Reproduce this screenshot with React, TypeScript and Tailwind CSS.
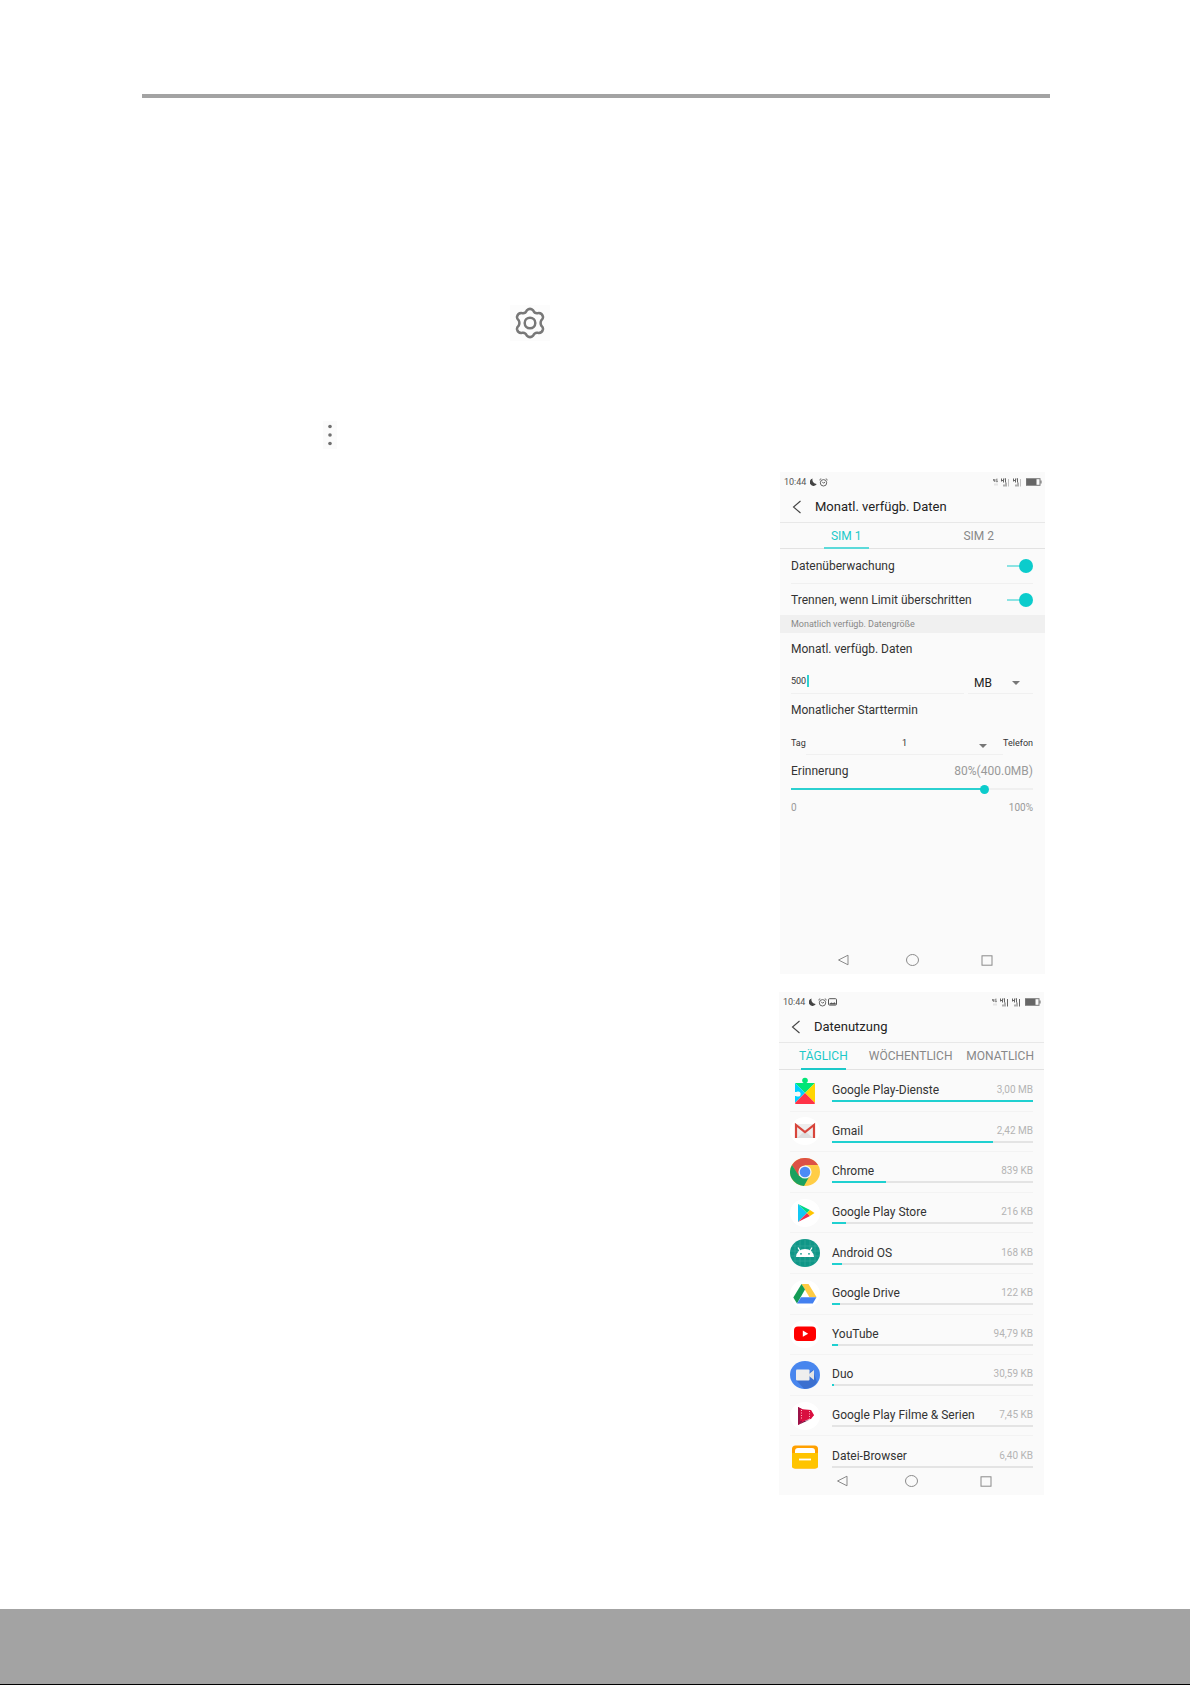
import React from "react";

function SignalIcon({ faint = false }: { faint?: boolean }) {
  return (
    <svg width="9" height="9" viewBox="0 0 9 9" fill="none" stroke="#666" aria-hidden="true">
      <path d="M0.5 0.500v3M2.500 0.500v4M0.5 2.500h2M4.500 0.500v4M3.500 1h1.500" strokeWidth="1" />
      <path d="M3 8.500V6.500M5 8.500V4.500" strokeWidth="1" />
      <path d="M7.500 8.500V1" stroke={faint ? "#c0c0c0" : "#666"} strokeWidth="1" />
    </svg>
  );
}

function StatusBar({ picture = false }: { picture?: boolean }) {
  return (
    <div className="flex h-5 items-center pl-1 pr-[3px] text-[9px] leading-5 text-[#555]">
      <span>10:44</span>
      <svg className="ml-1" width="7" height="8" viewBox="0 0 7 8" aria-hidden="true">
        <path d="M2.600 0.400A3.800 3.800 0 1 0 6.800 6 4.300 4.300 0 0 1 2.600 0.400Z" fill="#444" />
      </svg>
      <svg className="ml-[2px]" width="9" height="9" viewBox="0 0 9 9" fill="none" stroke="#555" strokeWidth="0.900" aria-hidden="true">
        <circle cx="4.500" cy="4.800" r="3.200" />
        <path d="M0.400 2 2.200 0.600M8.600 2 6.800 0.600M3.200 3.800 4.500 5.200 6 4.200" />
      </svg>
      {picture && (
        <svg className="ml-px" width="9" height="8" viewBox="0 0 9 8" fill="none" aria-hidden="true">
          <rect x="0.500" y="0.700" width="8" height="6.400" rx="1" stroke="#555" />
          <path d="M1.500 6.500V5.500l2-1L5 5.300 6.400 4.300 7.800 5.500v1z" fill="#555" />
        </svg>
      )}
      <div className="ml-auto flex items-center">
        <svg width="5" height="9" viewBox="0 0 5 9" fill="none" stroke="#777" strokeWidth="0.900" aria-hidden="true">
          <path d="M0.500 1v1.700h1.300M1.700 1v3M4.600 1.200H3.200v2.500h1.400V2.500" />
          <path d="M2 5.500v2M4 5.500v2" stroke="#ccc" />
        </svg>
        <span className="ml-[3px]"><SignalIcon faint={!picture} /></span>
        <span className="ml-[3px]"><SignalIcon faint={!picture} /></span>
        <svg className="ml-[4px]" width="16" height="8" viewBox="0 0 16 8" fill="none" aria-hidden="true">
          <rect x="0.500" y="0.700" width="13.500" height="6.600" stroke="#777" />
          <path d="M1 1h9.500v6H1z" fill="#666" />
          <path d="M15 2.500v3" stroke="#666" />
        </svg>
      </div>
    </div>
  );
}

function TitleBar({ title }: { title: string }) {
  return (
    <header className="flex h-[31px] items-center border-b border-[#e8e8e8] pl-[12px]">
      <button type="button" aria-label="Zurück">
        <svg width="10" height="14" viewBox="0 0 10 14" fill="none" stroke="#444" strokeWidth="1.100">
          <path d="M8.500 1 1.500 7l7 6" />
        </svg>
      </button>
      <h2 className="ml-[13px] text-[13px] leading-5 text-[#222]">{title}</h2>
    </header>
  );
}

function NavBar() {
  return (
    <nav className="flex h-7 items-center pl-[57px] text-[#8a8a8a]">
      <button type="button" aria-label="Zurück">
        <svg width="12" height="12" viewBox="0 0 12 12" fill="none" stroke="currentColor">
          <path d="M11 1.200v9.600L1.500 6z" />
        </svg>
      </button>
      <button type="button" aria-label="Startseite" className="ml-[57px]">
        <svg width="13" height="12" viewBox="0 0 13 12" fill="none" stroke="currentColor">
          <ellipse cx="6.500" cy="6" rx="6" ry="5.500" />
        </svg>
      </button>
      <button type="button" aria-label="Übersicht" className="ml-[62px]">
        <svg width="12" height="11" viewBox="0 0 12 11" fill="none" stroke="currentColor">
          <rect x="1" y="0.800" width="10" height="9.400" />
        </svg>
      </button>
    </nav>
  );
}

function Toggle({ label, divider = false }: { label: string; divider?: boolean }) {
  return (
    <label className={divider ? "flex h-[35px] items-center justify-between border-b border-[#f0f0f0]" : "flex h-[31px] items-center justify-between"}>
      <span>{label}</span>
      <input
        type="checkbox"
        defaultChecked
        className="relative h-[14px] w-[26px] appearance-none before:absolute before:left-0 before:top-[6px] before:h-[2px] before:w-[14px] before:bg-[#8ce3e3] after:absolute after:right-0 after:top-0 after:size-[14px] after:rounded-full after:bg-[#0ccccc]"
      />
    </label>
  );
}

function Caret() {
  return (
    <svg width="8" height="4" viewBox="0 0 8 4" className="pointer-events-none" aria-hidden="true">
      <path d="M0 0h8L4 4z" fill="#777" />
    </svg>
  );
}

function BudgetScreen() {
  return (
    <section className="flex h-[502px] w-[265px] flex-col bg-[#fafafa]">
      <StatusBar />
      <TitleBar title="Monatl. verfügb. Daten" />
      <div role="tablist" className="grid h-[26px] grid-cols-2 border-b border-[#e2e2e2] text-[12px] leading-5">
        <button type="button" role="tab" aria-selected="true" className="relative text-[#1cc9c9]">
          SIM 1
          <span className="absolute inset-x-11 -bottom-px h-[2px] bg-[#5cdada]" />
        </button>
        <button type="button" role="tab" aria-selected="false" className="text-[#888]">SIM 2</button>
      </div>
      <div className="pl-[11px] pr-3 text-[12px] leading-5 text-[#333]">
        <Toggle label="Datenüberwachung" divider />
        <Toggle label="Trennen, wenn Limit überschritten" />
      </div>
      <h3 className="h-[18px] bg-[#f0f0f0] px-[11px] text-[9px] leading-[18px] text-[#888]">Monatlich verfügb. Datengröße</h3>
      <div className="pl-[11px] pr-3 pt-[6px] text-[12px] leading-5 text-[#333]">
        <label htmlFor="amount" className="block">Monatl. verfügb. Daten</label>
        <div className="mt-[10px] flex gap-1">
          <div className="flex h-[25px] flex-1 items-center border-b border-[#f0f0f0]">
            <input id="amount" defaultValue="500" className="h-5 w-4 bg-transparent text-[9px] leading-5 outline-none" />
            <span className="h-3 w-[2px] bg-[#2fd0d0]" />
          </div>
          <div className="flex h-[25px] w-[65px] items-center border-b border-[#f0f0f0] pl-[6px] pt-1">
            <select aria-label="Einheit" className="w-[38px] appearance-none bg-transparent text-[12px] leading-5 text-[#222]">
              <option>MB</option>
            </select>
            <Caret />
          </div>
        </div>
        <label htmlFor="day" className="mt-[6px] block">Monatlicher Starttermin</label>
        <div className="mt-[10px] flex h-[25px] text-[9px] leading-[26px]">
          <span>Tag</span>
          <div className="relative flex-1 border-b border-[#f0f0f0]">
            <select id="day" className="h-6 w-full appearance-none bg-transparent text-center">
              <option>1</option>
            </select>
            <span className="absolute right-4 top-[14px]"><svg width="8" height="4" viewBox="0 0 8 4" className="block" aria-hidden="true"><path d="M0 0h8L4 4z" fill="#777" /></svg></span>
          </div>
          <span>Telefon</span>
        </div>
        <div className="mt-[6px] flex justify-between">
          <label htmlFor="reminder">Erinnerung</label>
          <output className="text-[#999]">80%(400.0MB)</output>
        </div>
        <div className="relative mt-[7px] h-[2px] bg-[#f0f0f0]">
          <div className="h-full w-4/5 bg-[#2bd0d0]" />
          <input
            id="reminder"
            type="range"
            defaultValue={80}
            className="absolute -inset-x-1 -top-1 h-[10px] appearance-none bg-transparent [&::-webkit-slider-thumb]:size-[9px] [&::-webkit-slider-thumb]:appearance-none [&::-webkit-slider-thumb]:rounded-full [&::-webkit-slider-thumb]:bg-[#0ccccc]"
          />
        </div>
        <div className="mt-2 flex justify-between text-[10px] text-[#999]">
          <span>0</span>
          <span>100%</span>
        </div>
      </div>
      <div className="mt-auto"><NavBar /></div>
    </section>
  );
}

function Disc({ children }: { children: React.ReactNode }) {
  return (
    <svg width="30" height="28" viewBox="0 0 30 28" aria-hidden="true">
      <ellipse cx="15" cy="14" rx="15" ry="14" fill="#fff" />
      {children}
    </svg>
  );
}

const PlayServicesIcon = (
  <svg width="30" height="28" viewBox="0 0 30 28" aria-hidden="true">
    <path d="M5 6h20L15 16z" fill="#00e676" />
    <circle cx="15" cy="3.500" r="2.800" fill="#00e676" />
    <path d="M5 6l10 10L5 26z" fill="#00d0ff" />
    <path d="M25 6v20L15 16z" fill="#ffd500" />
    <path d="M5 26l10-10 10 10q0 1-1 1H6q-1 0-1-1z" fill="#ff3347" />
    <circle cx="8" cy="17" r="2.600" fill="#fafafa" />
    <path d="M4 15h3v4H4z" fill="#fafafa" />
  </svg>
);
const GmailIcon = (
  <Disc>
    <path d="M5 7h20v14H5z" fill="#eee" />
    <path d="M7 21l8-7 8 7z" fill="#ddd" />
    <path d="M6 21V8l9 7 9-7v13" fill="none" stroke="#d8453b" strokeWidth="2.200" />
  </Disc>
);
const ChromeIcon = (
  <Disc>
    <ellipse cx="15" cy="14" rx="15" ry="14" fill="#ffcd46" />
    <path d="M2 7A15 14 0 0 1 28 7H15l-6.500 11z" fill="#dd5145" />
    <path d="M2 7l7 11 10 1-5 9A15 14 0 0 1 2 7z" fill="#1aa15f" />
    <circle cx="15" cy="14" r="6.600" fill="#f5f5f5" />
    <circle cx="15" cy="14" r="5.300" fill="#4c8bf5" />
  </Disc>
);
const PlayStoreIcon = (
  <Disc>
    <path d="M8 5v18l9-9z" fill="#12c8f4" />
    <path d="M8 5l12 6-3 3z" fill="#00d883" />
    <path d="M8 23l12-6-3-3z" fill="#ef3150" />
    <path d="M20 11l4.500 3-4.500 3-3-3z" fill="#ffc500" />
  </Disc>
);
const AndroidIcon = (
  <Disc>
    <ellipse cx="15" cy="14" rx="15" ry="14" fill="#0f9687" />
    <path d="M5 4v20M10 1v26M15 0v28M20 1v26M25 4v20M2 7h26M0 12h30M0 17h30M3 22h24" stroke="#42ada1" strokeWidth="0.500" />
    <path d="M6 18a9 8 0 0 1 18 0z" fill="#fff" />
    <path d="M10 12L8 8.500M20 12l2-3.500" stroke="#fff" strokeWidth="1.200" />
    <circle cx="11" cy="14.800" r="0.900" fill="#0f9687" />
    <circle cx="19" cy="14.800" r="0.900" fill="#0f9687" />
  </Disc>
);
const DriveIcon = (
  <Disc>
    <path d="M11.500 4h7L26.500 17h-7.200z" fill="#ffcc44" />
    <path d="M11.500 4L3.300 17.500 7 23.500l8-14z" fill="#149c56" />
    <path d="M11 17.200h15.500L22.800 23.500H7z" fill="#4380f0" />
  </Disc>
);
const YouTubeIcon = (
  <Disc>
    <rect x="4" y="6.500" width="22" height="14.500" rx="4" fill="#f00" />
    <path d="M12.800 10.600v6.200l5.400-3.100z" fill="#fff" />
  </Disc>
);
const DuoIcon = (
  <Disc>
    <ellipse cx="15" cy="14" rx="15" ry="14" fill="#4886ee" />
    <path d="M6 19l8 8.800h2q7-.8 11-6.500L23 9z" fill="#3c70cf" />
    <rect x="6" y="8.500" width="13.500" height="11" rx="1" fill="#eee" />
    <path d="M19 13l5-4v10l-5-4z" fill="#e4e4e4" />
  </Disc>
);
const MoviesIcon = (
  <Disc>
    <path d="M8 5l16 8.500L8 23z" fill="#e9134f" />
    <path d="M8 5v18l4-3V7z" fill="#9b1248" />
    <path d="M10 7l11 1 3 5-3 4-11 2z" fill="#d90f3f" />
    <path d="M11.500 8v10M19.500 9v8" stroke="#ffb4c4" strokeDasharray="1 1.500" />
    <path d="M8 23l6-4 5-1z" fill="#73113c" />
  </Disc>
);
const FilesIcon = (
  <svg width="30" height="28" viewBox="0 0 30 28" aria-hidden="true">
    <rect x="2" y="2.500" width="26" height="23" rx="3.500" fill="#ffa000" />
    <path d="M5 10V8q0-3 3-3h14q3 0 3 3v2z" fill="#fff" />
    <path d="M2 10h26v13q0 2.500-3 2.500H5q-3 0-3-2.500z" fill="#ffc400" />
    <path d="M9 16.500h12" stroke="#fff" strokeWidth="1.800" />
  </svg>
);

const apps = [
  { name: "Google Play-Dienste", size: "3,00 MB", share: 100, icon: PlayServicesIcon },
  { name: "Gmail", size: "2,42 MB", share: 80, icon: GmailIcon },
  { name: "Chrome", size: "839 KB", share: 27, icon: ChromeIcon },
  { name: "Google Play Store", size: "216 KB", share: 7, icon: PlayStoreIcon },
  { name: "Android OS", size: "168 KB", share: 5, icon: AndroidIcon },
  { name: "Google Drive", size: "122 KB", share: 4, icon: DriveIcon },
  { name: "YouTube", size: "94,79 KB", share: 3, icon: YouTubeIcon },
  { name: "Duo", size: "30,59 KB", share: 1, icon: DuoIcon },
  { name: "Google Play Filme & Serien", size: "7,45 KB", share: 0, icon: MoviesIcon },
  { name: "Datei-Browser", size: "6,40 KB", share: 0, icon: FilesIcon },
];

function UsageScreen() {
  return (
    <section className="flex h-[503px] w-[265px] flex-col bg-[#fafafa]">
      <StatusBar picture />
      <TitleBar title="Datenutzung" />
      <div role="tablist" className="flex h-[27px] items-stretch border-b border-[#e2e2e2] pl-5 pr-[10px] text-[12px] leading-5 text-[#888]">
        <button type="button" role="tab" aria-selected="true" className="relative text-[#1cc9c9]">
          TÄGLICH
          <span className="absolute inset-x-[2px] -bottom-px h-[2px] bg-[#1cc9c9]" />
        </button>
        <button type="button" role="tab" aria-selected="false" className="ml-[21px]">WÖCHENTLICH</button>
        <button type="button" role="tab" aria-selected="false" className="ml-auto">MONATLICH</button>
      </div>
      <ul className="mx-[11px] mt-px grid h-[406px] auto-rows-fr divide-y divide-[#f3f3f3]">
        {apps.map((app) => (
          <li key={app.name} className="flex items-center gap-3">
            <span className="shrink-0">{app.icon}</span>
            <div className="flex-1 pt-px">
              <div className="flex justify-between text-[12px] leading-5 text-[#333]">
                <span>{app.name}</span>
                <span className="text-[10px] leading-5 text-[#b4b4b4]">{app.size}</span>
              </div>
              <div className="h-[2px] bg-[#e4e4e4]">
                <div className="h-full bg-[#1fd0d0]" style={{ width: `${app.share}%` }} />
              </div>
            </div>
          </li>
        ))}
      </ul>
      <div className="-mt-[10px]"><NavBar /></div>
    </section>
  );
}

export default function App() {
  return (
    <div className="flex min-h-screen flex-col bg-white font-[Roboto,sans-serif]">
      <main className="flex-1 pl-[142px] pr-[141px] pt-[94px]">
        <hr className="h-1 border-0 bg-[#a3a3a3]" />
        <div className="ml-[368px] mt-[207px] flex h-9 w-10 items-center justify-center bg-[#fcfcfc]">
          <svg width="30" height="32" viewBox="0 0 30 32" fill="none" stroke="#777" strokeWidth="2.500" strokeLinejoin="round" role="img" aria-label="Einstellungen">
            <path d="M11.800 3.400Q15 .2 18.200 3.400Q19.600 6.600 22.500 6.200Q27 5.400 28 9.800Q28.200 11.600 26.400 13.200Q24.800 16 26.400 18.800Q28.200 20.400 28 22.200Q27 26.600 22.500 25.800Q19.600 25.400 18.200 28.600Q15 31.800 11.800 28.600Q10.400 25.400 7.500 25.800Q3 26.600 2 22.200Q1.800 20.400 3.600 18.800Q5.200 16 3.600 13.200Q1.800 11.600 2 9.800Q3 5.400 7.500 6.200Q10.400 6.600 11.800 3.400Z" />
            <circle cx="15" cy="16" r="5.300" />
          </svg>
        </div>
        <div className="ml-[181px] mt-20 flex h-7 w-[14px] items-center justify-center bg-[#fbfbfb]">
          <svg width="4" height="22" viewBox="0 0 4 22" fill="#707070" role="img" aria-label="Menü">
            <circle cx="2" cy="2.500" r="1.800" />
            <circle cx="2" cy="11" r="1.800" />
            <circle cx="2" cy="19.500" r="1.800" />
          </svg>
        </div>
        <div className="mt-[23px] flex flex-col items-end gap-[18px] pr-[5px]">
          <BudgetScreen />
          <div className="pr-px"><UsageScreen /></div>
        </div>
      </main>
      <footer className="mr-px mt-[114px] h-[76px] border-b border-black bg-[#a3a3a3]" />
    </div>
  );
}
